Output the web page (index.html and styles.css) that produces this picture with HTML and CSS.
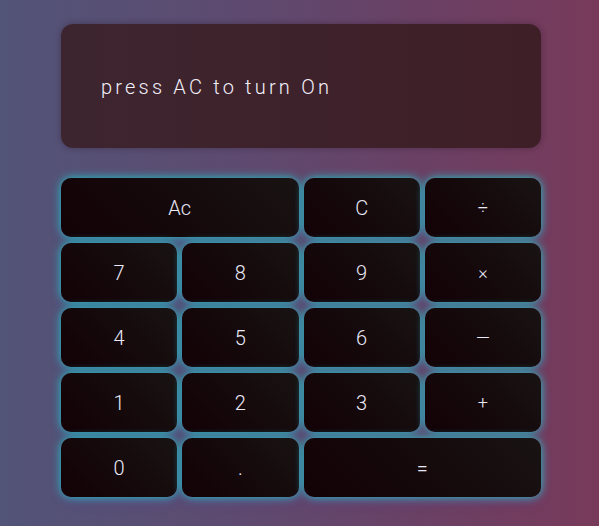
FILE: index.html
```html
<!DOCTYPE html>
<html lang="en">
<head>
<meta charset="utf-8">
<title>Calculator</title>
<link rel="stylesheet" href="styles.css">
</head>
<body>
<div class="calc">
  <div class="display">press AC to turn On</div>
  <div class="keys">
    <button class="key wide">Ac</button>
    <button class="key">C</button>
    <button class="key op">÷</button>
    <button class="key">7</button>
    <button class="key">8</button>
    <button class="key">9</button>
    <button class="key op">×</button>
    <button class="key">4</button>
    <button class="key">5</button>
    <button class="key">6</button>
    <button class="key op">—</button>
    <button class="key">1</button>
    <button class="key">2</button>
    <button class="key">3</button>
    <button class="key op">+</button>
    <button class="key">0</button>
    <button class="key">.</button>
    <button class="key wide">=</button>
  </div>
</div>
</body>
</html>
```
FILE: styles.css
```css
html, body {
  margin: 0;
  height: 100%;
}
body {
  background: linear-gradient(90deg, #525478 0%, #5e4a70 40%, #6c3f63 75%, #783a5a 100%);
  font-family: "Roboto", "DejaVu Sans", sans-serif;
  font-weight: 300;
}
.calc {
  width: 480px;
  padding: 24px 0 0 61px;
  display: flex;
  flex-direction: column;
  gap: 30px;
}
.display {
  height: 124px;
  box-sizing: border-box;
  border-radius: 12px;
  background: linear-gradient(90deg, #3d252f, #3f1f27);
  box-shadow: 0 0 6px rgba(30, 15, 30, 0.35);
  color: #f2f0fa;
  font-size: 20px;
  letter-spacing: 3.2px;
  display: flex;
  align-items: center;
  padding: 2px 40px 0;
}
.keys {
  display: grid;
  grid-template-columns: repeat(4, 1fr);
  grid-auto-rows: 59px;
  column-gap: 5px;
  row-gap: 6px;
}
.key {
  border: 0;
  border-radius: 10px;
  background: linear-gradient(45deg, #130106 0%, #150a0c 55%, #191313 100%);
  color: #eaeaf8;
  font-family: "Roboto", "DejaVu Sans", sans-serif;
  font-weight: 300;
  font-size: 20px;
  box-shadow: 0 0 10px rgba(30, 205, 205, 1), 0 6px 12px rgba(90, 50, 170, 0.2);
  padding: 0;
}
.key.wide {
  grid-column: span 2;
}
.key.op {
  font-size: 18px;
}
```
